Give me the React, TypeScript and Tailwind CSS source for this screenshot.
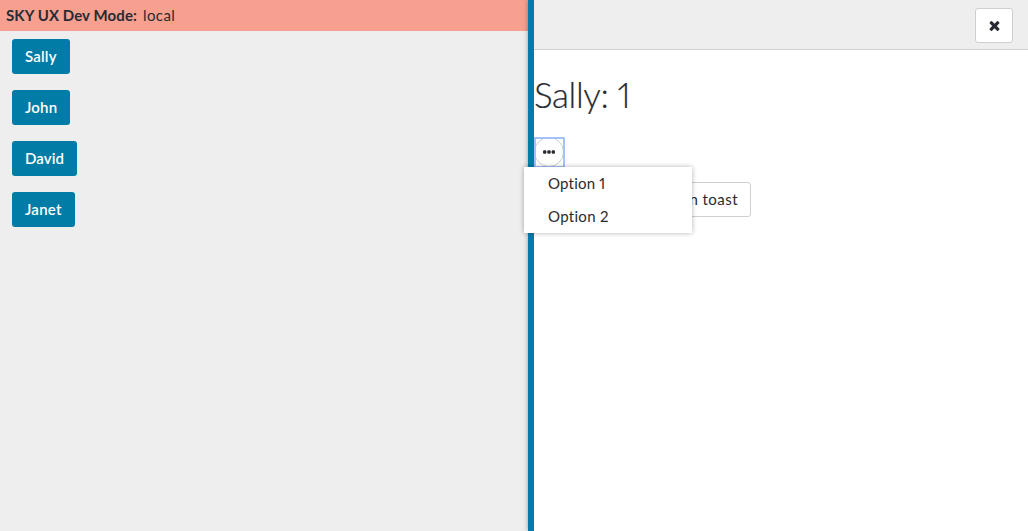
import React from "react";

const names = [
  { name: "Sally", style: "w-[58px] tracking-[0.2px]" },
  { name: "John", style: "w-[58px] tracking-[0.2px]" },
  { name: "David", style: "w-[65px] tracking-[0.1px]" },
  { name: "Janet", style: "w-[63px] tracking-[0.25px]" },
];

function CloseIcon() {
  return (
    <svg viewBox="0 0 1792 1792" className="h-[15px] w-[15px]" fill="currentColor" aria-hidden="true">
      <path d="M1490 1322q0 40-28 68l-136 136q-28 28-68 28t-68-28l-294-294-294 294q-28 28-68 28t-68-28l-136-136q-28-28-28-68t28-68l294-294-294-294q-28-28-28-68t28-68l136-136q28-28 68-28t68 28l294 294 294-294q28-28 68-28t68 28l136 136q28 28 28 68t-28 68l-294 294 294 294q28 28 28 68z" />
    </svg>
  );
}

function EllipsisIcon() {
  return (
    <svg viewBox="0 0 12 4" className="h-[4px] w-[12px]" fill="currentColor" aria-hidden="true">
      <rect x="0" y="0.3" width="3.4" height="3.4" rx="1.2" />
      <rect x="4.3" y="0.3" width="3.4" height="3.4" rx="1.2" />
      <rect x="8.6" y="0.3" width="3.4" height="3.4" rx="1.2" />
    </svg>
  );
}

function Menu() {
  return (
    <div className="absolute top-[30px] -left-[10px] z-10 h-[66px] w-[168px] bg-white shadow-[0_0_5px_rgba(0,0,0,0.3)]">
      <div className="flex h-[33px] items-center pb-px pl-6 tracking-[0.2px]">Option 1</div>
      <div className="flex h-[33px] items-center pb-px pl-6 tracking-[0.3px]">Option 2</div>
    </div>
  );
}

export default function App() {
  return (
    <div className="flex h-[531px] w-[1028px] overflow-hidden bg-[#eeeeee] font-['Lato',sans-serif] text-[15px] leading-5 text-[#282b31] proportional-nums">
      <main className="w-[528px] shrink-0">
        <div className="flex h-[31px] items-center gap-[6px] bg-[#f7a08f] pb-px pl-[6px]">
          <strong className="w-[131px] whitespace-nowrap font-bold tracking-[0.1px]">SKY UX Dev Mode:</strong>
          <span className="tracking-[0.4px]">local</span>
        </div>
        <div className="flex flex-col items-start gap-4 pl-3 pt-2">
          {names.map((item) => (
            <button
              key={item.name}
              className={`flex h-[35px] items-center rounded-[3px] bg-[#007ca6] pb-px pl-[13px] font-semibold text-white ${item.style}`}
            >
              {item.name}
            </button>
          ))}
        </div>
      </main>
      <aside className="flex min-w-0 flex-1 shadow-[0_0_5px_rgba(0,0,0,0.35)]">
        <div className="w-[6px] shrink-0 bg-[#007ca6]" />
        <section className="flex min-w-0 flex-1 flex-col bg-white">
          <header className="flex h-[50px] shrink-0 items-start justify-end border-b border-[#cdcfd2] bg-[#eeeeee] pr-[15px] pt-2">
            <button aria-label="Close" className="flex h-[35px] w-[38px] items-center justify-center rounded-[3px] border border-[#cdcfd2] bg-white">
              <CloseIcon />
            </button>
          </header>
          <h1 className="mt-6 h-[40px] text-[35px] font-light leading-10 tracking-[-0.4px] [-webkit-text-stroke:0.2px_#282b31]">Sally: 1</h1>
          <div className="relative mt-[23px] h-[30px] w-[31px]">
            <button aria-label="Context menu" className="flex h-[31px] w-[31px] items-start justify-start rounded-[1px] bg-white outline-2 -outline-offset-2 outline-[#a3c1fa]">
              <span className="flex h-[30px] w-[30px] shrink-0 items-center justify-center rounded-full border border-[#cdcfd2]">
                <EllipsisIcon />
              </span>
            </button>
            <Menu />
          </div>
          <button className="mt-[15px] flex h-[35px] w-[217px] items-center justify-end whitespace-nowrap rounded-[3px] border border-[#cdcfd2] pb-px pr-3 tracking-[0.45px]">
            Open toast
          </button>
        </section>
      </aside>
    </div>
  );
}
